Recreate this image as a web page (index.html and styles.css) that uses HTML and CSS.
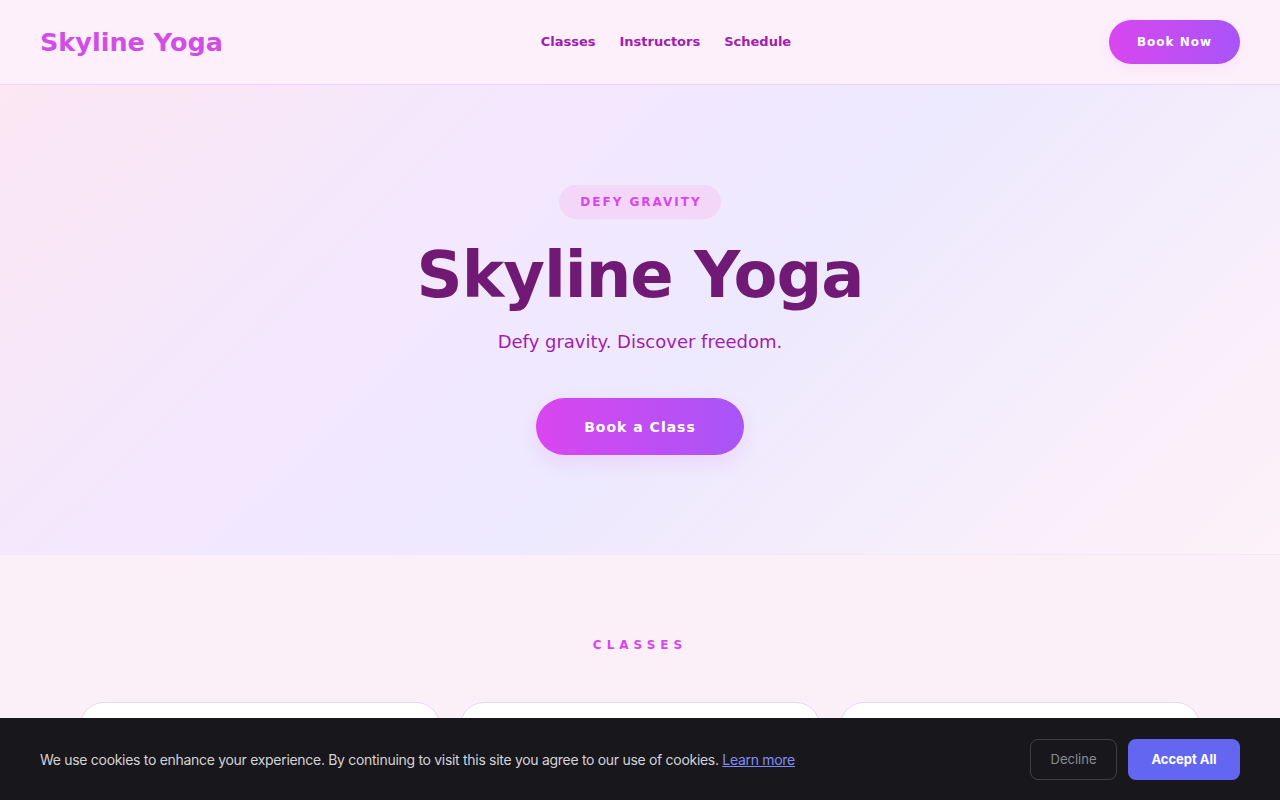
FILE: index.html
```html
<!DOCTYPE html>
<html lang="en">
<head>
<meta charset="utf-8">
<title>Skyline Yoga</title>
<link rel="stylesheet" href="styles.css">
</head>
<body>
<header class="nav">
  <a class="logo" href="#">Skyline Yoga</a>
  <nav class="links">
    <a href="#">Classes</a>
    <a href="#">Instructors</a>
    <a href="#">Schedule</a>
  </nav>
  <a class="btn-nav" href="#">Book Now</a>
</header>
<section class="hero">
  <span class="badge">DEFY GRAVITY</span>
  <h1 class="title">Skyline Yoga</h1>
  <p class="subtitle">Defy gravity. Discover freedom.</p>
  <a class="btn-hero" href="#">Book a Class</a>
</section>
<section class="classes">
  <div class="label">CLASSES</div>
  <div class="cards">
    <div class="card"></div>
    <div class="card"></div>
    <div class="card"></div>
  </div>
</section>
<div class="cookie">
  <p class="cookie-text">We use cookies to enhance your experience. By continuing to visit this site you agree to our use of cookies. <a href="#">Learn more</a></p>
  <div class="cookie-actions">
    <button class="decline">Decline</button>
    <button class="accept">Accept All</button>
  </div>
</div>
</body>
</html>
```
FILE: styles.css
```css
* { box-sizing: border-box; }
html, body { margin: 0; padding: 0; }
body {
  font-family: "DejaVu Sans", sans-serif;
  background: #fcf0f8;
  overflow: hidden;
  height: 800px;
}
a { text-decoration: none; }
.nav {
  height: 85px;
  display: flex;
  align-items: center;
  justify-content: space-between;
  padding: 0 40px;
  background: #fdf0fa;
  border-bottom: 1px solid #f5d0fe;
}
.logo {
  font-size: 25.5px;
  font-weight: 700;
  color: #d14ee6;
}
.links { display: flex; gap: 24px; margin-top: -2px; }
.links a {
  font-size: 13px;
  font-weight: 700;
  color: #a21caf;
}
.btn-nav {
  width: 131px;
  height: 44px;
  display: flex;
  align-items: center;
  justify-content: center;
  border-radius: 22px;
  background: linear-gradient(90deg, #d946ef, #a855f7);
  color: #fff;
  font-size: 12px;
  font-weight: 700;
  letter-spacing: 1px;
  box-shadow: 0 4px 12px rgba(217, 70, 239, 0.08);
}
.hero {
  height: 470px;
  display: flex;
  flex-direction: column;
  align-items: center;
  padding-top: 100px;
  background: linear-gradient(135deg, #fce7f3 0%, #f3e8ff 35%, #ede9fe 55%, #fdf2f8 100%);
  border-bottom: 1px solid #f5e8f5;
}
.badge {
  display: inline-block;
  padding: 10px 19px 10px 21px;
  border-radius: 17px;
  background: #f3d6f8;
  color: #d946ef;
  font-size: 12px;
  font-weight: 700;
  letter-spacing: 2px;
  line-height: 14px;
}
.title {
  margin: 16px 0 0;
  font-size: 64px;
  line-height: 80px;
  font-weight: 700;
  letter-spacing: -1px;
  color: #701a75;
}
.subtitle {
  margin: 13px 0 0;
  font-size: 18px;
  line-height: 28px;
  color: #a21caf;
}
.btn-hero {
  margin-top: 42px;
  width: 208px;
  height: 57px;
  display: flex;
  align-items: center;
  justify-content: center;
  border-radius: 29px;
  background: linear-gradient(90deg, #d946ef, #a855f7);
  color: #fff;
  font-size: 14px;
  font-weight: 700;
  letter-spacing: 1px;
  box-shadow: 0 8px 20px rgba(217, 70, 239, 0.12);
}
.classes {
  padding: 81px 80px 0;
  text-align: center;
}
.label {
  font-size: 12px;
  font-weight: 700;
  letter-spacing: 5px;
  color: #d946ef;
  line-height: 18px;
}
.cards {
  margin-top: 48px;
  display: grid;
  grid-template-columns: repeat(3, 1fr);
  gap: 20px;
}
.card {
  height: 260px;
  background: #fff;
  border: 1px solid #ead8f5;
  border-radius: 24px;
}
.cookie {
  position: fixed;
  left: 0;
  right: 0;
  bottom: 0;
  height: 82px;
  background: #18171c;
  display: flex;
  align-items: center;
  justify-content: space-between;
  padding: 0 40px;
  font-family: Inter, sans-serif;
}
.cookie-text {
  margin: 0;
  font-size: 14px;
  color: #d4d4d8;
  letter-spacing: -0.3px;
}
.cookie-text a {
  color: #818cf8;
  text-decoration: underline;
}
.cookie-actions { display: flex; gap: 11px; }
.decline {
  width: 87px;
  height: 41px;
  border: 1px solid #3f3f46;
  border-radius: 8px;
  background: transparent;
  color: #8b8b93;
  font-family: Inter, sans-serif;
  font-size: 13px;
}
.accept {
  width: 112px;
  height: 41px;
  border: none;
  border-radius: 8px;
  background: #6366f1;
  color: #fff;
  font-family: Inter, sans-serif;
  font-size: 13px;
  font-weight: 700;
}
```
